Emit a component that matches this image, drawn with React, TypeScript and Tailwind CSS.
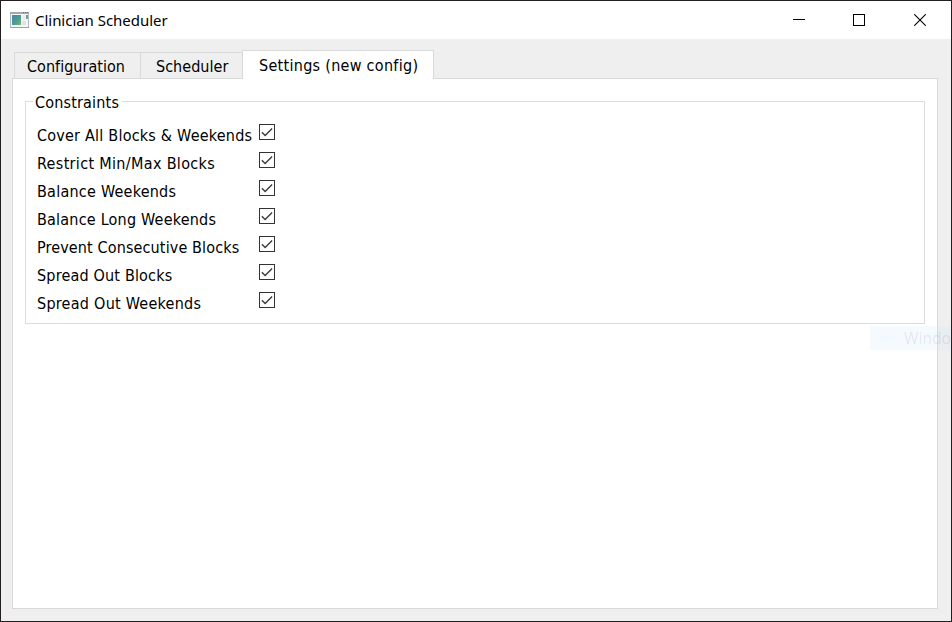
const constraints = [
  { label: "Cover All Blocks & Weekends", tracking: "tracking-[0.22px]" },
  { label: "Restrict Min/Max Blocks", tracking: "tracking-[0.33px]" },
  { label: "Balance Weekends", tracking: "tracking-[0.24px]" },
  { label: "Balance Long Weekends", tracking: "tracking-[0.21px]" },
  { label: "Prevent Consecutive Blocks", tracking: "tracking-[0.13px]" },
  { label: "Spread Out Blocks", tracking: "tracking-[0.18px]" },
  { label: "Spread Out Weekends", tracking: "tracking-[0.26px]" },
];

function AppIcon() {
  return (
    <svg width="20" height="16" viewBox="0 0 20 16" shapeRendering="crispEdges">
      <defs>
        <linearGradient id="screen" x1="0" y1="0" x2="1" y2="1">
          <stop offset="0" stopColor="#4f86b0" />
          <stop offset="0.5" stopColor="#4a9a90" />
          <stop offset="1" stopColor="#74b778" />
        </linearGradient>
      </defs>
      <rect x="0.5" y="0.5" width="18" height="15" fill="#f4f6f8" stroke="#b4bac0" />
      <rect x="0" y="0" width="19" height="2" fill="#a3a9b0" />
      <rect x="0" y="15" width="19" height="1" fill="#9aa1a9" />
      <rect x="13" y="0" width="1" height="1" fill="#6b717c" />
      <rect x="15" y="0" width="1" height="1" fill="#6b717c" />
      <rect x="17" y="0" width="1" height="1" fill="#6b717c" />
      <rect x="2" y="3" width="9" height="10" fill="url(#screen)" />
      <rect x="12" y="3" width="4" height="5" fill="#eceef1" />
      <rect x="12" y="9" width="4" height="4" fill="#dfe3e7" />
      <rect x="16" y="3" width="2" height="4" fill="#6fa295" />
    </svg>
  );
}

function TitleBar() {
  return (
    <header className="flex h-[38px] items-center bg-white pl-[9px]">
      <AppIcon />
      <h1 className="ml-[5px] flex-1 whitespace-nowrap font-['Noto_Sans',sans-serif] text-[15px] leading-5 tracking-[-0.03px]">
        Clinician Scheduler
      </h1>
      <div className="flex w-[182px] items-center">
        <svg className="ml-[24px]" width="12" height="12" shapeRendering="crispEdges">
          <path d="M0 5.5H12" stroke="#000" />
        </svg>
        <svg className="ml-[48px]" width="12" height="12" shapeRendering="crispEdges">
          <rect x="0.5" y="0.5" width="11" height="11" fill="none" stroke="#000" />
        </svg>
        <svg className="ml-[49px]" width="12" height="12">
          <path d="M0.2 0.2L11.8 11.8M11.8 0.2L0.2 11.8" stroke="#000" strokeWidth="1.1" />
        </svg>
      </div>
    </header>
  );
}

function Checkbox() {
  return (
    <svg className="mt-[3px]" width="16" height="16" viewBox="0 0 16 16">
      <rect x="0.5" y="0.5" width="15" height="15" fill="#fff" stroke="#333" />
      <path d="M2.9 8.3L6.1 11.5L13.1 4.5" fill="none" stroke="#3c3c3c" strokeWidth="1.4" />
    </svg>
  );
}

export default function App() {
  return (
    <div className="relative flex h-[622px] w-[952px] flex-col overflow-hidden border border-[#231f20] bg-[#efefef] font-['DejaVu_Sans_Condensed','DejaVu_Sans',sans-serif] text-base text-black">
      <TitleBar />
      <nav className="z-10 ml-[13px] mt-[11px] flex h-[29px] items-end whitespace-nowrap">
        <div className="h-[27px] w-[127px] border border-b-0 border-[#d9d9d9] pl-[12px] leading-[27px] tracking-[0.03px]">
          Configuration
        </div>
        <div className="h-[27px] w-[101px] border-t border-[#d9d9d9] pl-[15px] leading-[27px] tracking-[0.03px]">
          Scheduler
        </div>
        <div className="h-[29px] w-[192px] border border-b-0 border-[#d9d9d9] bg-white pl-[16px] leading-[29px] tracking-[0.29px]">
          Settings (new config)
        </div>
      </nav>
      <main className="-mt-px ml-[11px] h-[531px] w-[926px] border border-[#d9d9d9] bg-white px-[12px] pt-[22px]">
        <section className="h-[223px] w-[900px] border border-[#dcdcdc]">
          <h2 className="-mt-[11px] ml-[7px] h-[22px] w-[89px] whitespace-nowrap bg-white pl-[2px] leading-[24px] tracking-[0.18px]">
            Constraints
          </h2>
          <ul className="mt-[8px] pl-[11px]">
            {constraints.map((c) => (
              <li key={c.label} className="flex h-[28px] items-start">
                <span className={`w-[222px] whitespace-nowrap leading-[29px] ${c.tracking}`}>{c.label}</span>
                <Checkbox />
              </li>
            ))}
          </ul>
        </section>
      </main>
      <div className="absolute left-[869px] top-[325px] h-6 w-[81px] whitespace-nowrap bg-[#cce8ff]/20 pl-[34px] font-['Noto_Sans',sans-serif] text-[15.5px] leading-6 text-[#4a3030]/10">
        Windo
      </div>
    </div>
  );
}
